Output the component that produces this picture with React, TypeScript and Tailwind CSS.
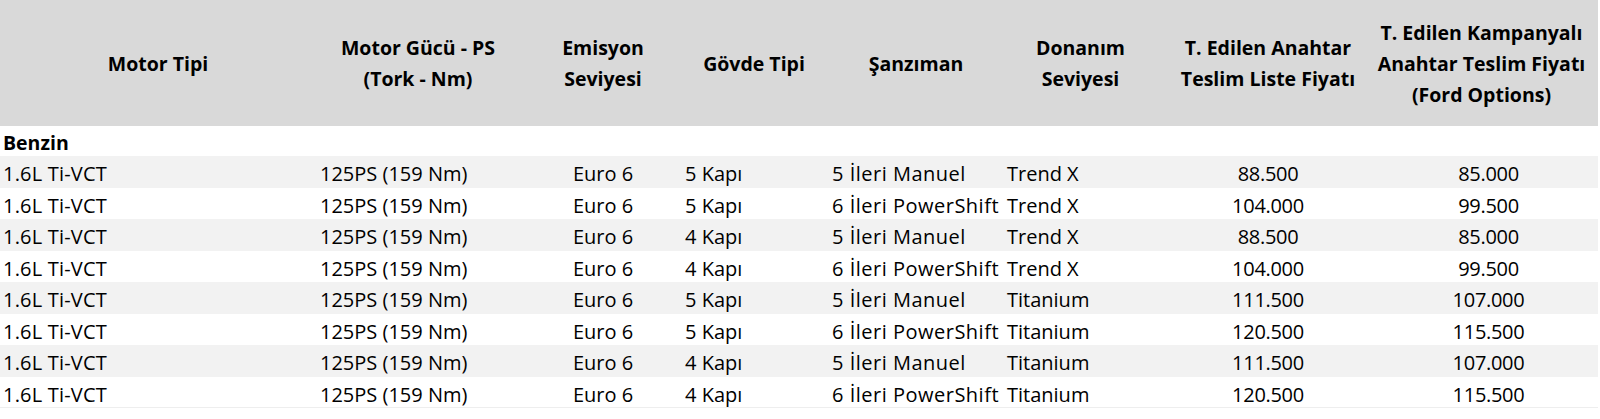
import React from "react";

type Row = {
  motor: string;
  guc: string;
  emisyon: string;
  govde: string;
  sanziman: string;
  donanim: string;
  liste: string;
  kampanya: string;
};

const rows: Row[] = [
  { motor: "1.6L Ti-VCT", guc: "125PS (159 Nm)", emisyon: "Euro 6", govde: "5 Kapı", sanziman: "5 İleri Manuel", donanim: "Trend X", liste: "88.500", kampanya: "85.000" },
  { motor: "1.6L Ti-VCT", guc: "125PS (159 Nm)", emisyon: "Euro 6", govde: "5 Kapı", sanziman: "6 İleri PowerShift", donanim: "Trend X", liste: "104.000", kampanya: "99.500" },
  { motor: "1.6L Ti-VCT", guc: "125PS (159 Nm)", emisyon: "Euro 6", govde: "4 Kapı", sanziman: "5 İleri Manuel", donanim: "Trend X", liste: "88.500", kampanya: "85.000" },
  { motor: "1.6L Ti-VCT", guc: "125PS (159 Nm)", emisyon: "Euro 6", govde: "4 Kapı", sanziman: "6 İleri PowerShift", donanim: "Trend X", liste: "104.000", kampanya: "99.500" },
  { motor: "1.6L Ti-VCT", guc: "125PS (159 Nm)", emisyon: "Euro 6", govde: "5 Kapı", sanziman: "5 İleri Manuel", donanim: "Titanium", liste: "111.500", kampanya: "107.000" },
  { motor: "1.6L Ti-VCT", guc: "125PS (159 Nm)", emisyon: "Euro 6", govde: "5 Kapı", sanziman: "6 İleri PowerShift", donanim: "Titanium", liste: "120.500", kampanya: "115.500" },
  { motor: "1.6L Ti-VCT", guc: "125PS (159 Nm)", emisyon: "Euro 6", govde: "4 Kapı", sanziman: "5 İleri Manuel", donanim: "Titanium", liste: "111.500", kampanya: "107.000" },
  { motor: "1.6L Ti-VCT", guc: "125PS (159 Nm)", emisyon: "Euro 6", govde: "4 Kapı", sanziman: "6 İleri PowerShift", donanim: "Titanium", liste: "120.500", kampanya: "115.500" },
];

const cols = "grid grid-cols-[316px_210px_154px_148px_176px_153px_222px_219px]";

function HeaderCell({ lines, extra = "" }: { lines: string[]; extra?: string }) {
  return (
    <div className={`flex flex-col items-center justify-center text-center ${extra}`}>
      {lines.map((l, i) => (
        <div key={i} className="whitespace-nowrap leading-[31px]">
          {l}
        </div>
      ))}
    </div>
  );
}

export default function App() {
  return (
    <div className="w-[1600px] h-[419px] bg-white text-black font-['Open_Sans',sans-serif] text-[20px] overflow-hidden">
      <div className="w-[1598px]">
        <div className={`${cols} h-[126px] bg-[#d9d9d9] font-bold text-[19.5px]`}>
          <HeaderCell lines={["Motor Tipi"]} />
          <HeaderCell lines={["Motor Gücü - PS", "(Tork - Nm)"]} extra="pr-[6px]" />
          <HeaderCell lines={["Emisyon", "Seviyesi"]} />
          <HeaderCell lines={["Gövde Tipi"]} />
          <HeaderCell lines={["Şanzıman"]} />
          <HeaderCell lines={["Donanım", "Seviyesi"]} />
          <HeaderCell lines={["T. Edilen Anahtar", "Teslim Liste Fiyatı"]} />
          <HeaderCell lines={["T. Edilen Kampanyalı", "Anahtar Teslim Fiyatı", "(Ford Options)"]} extra="pr-[14px]" />
        </div>
        <div className="h-[30px] flex items-center pl-[3px] pt-[4px] font-bold text-[19.5px]">Benzin</div>
        {rows.map((r, i) => (
          <div
            key={i}
            className={`${cols} h-[31.5px] items-center pt-[3px] whitespace-nowrap ${i % 2 === 0 ? "bg-[#f2f2f2]" : "bg-white"} ${i === rows.length - 1 ? "border-b border-[#eeeeee]" : ""}`}
          >
            <div className="pl-[3px] tracking-[0.2px]">{r.motor}</div>
            <div className="pl-[4px]">{r.guc}</div>
            <div className="text-center">{r.emisyon}</div>
            <div className="pl-[5px]">{r.govde}</div>
            <div className="pl-[4px] tracking-[0.5px]">{r.sanziman}</div>
            <div className="pl-[3px]">{r.donanim}</div>
            <div className="text-center tracking-[-0.3px]">{r.liste}</div>
            <div className="text-center tracking-[-0.3px]">{r.kampanya}</div>
          </div>
        ))}
      </div>
    </div>
  );
}
